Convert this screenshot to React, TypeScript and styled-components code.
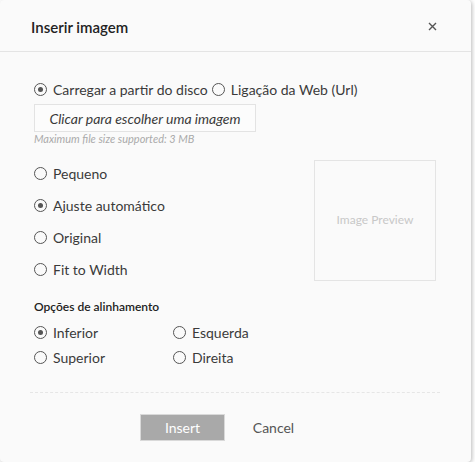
import React, { useState } from 'react'
import styled, { createGlobalStyle } from 'styled-components'

const GlobalStyle = createGlobalStyle`
  body {
    margin: 0;
    background: #ffffff;
    font-family: Lato, "Open Sans", Arial, sans-serif;
    color: #333333;
  }
`

const sizes = ['Pequeno', 'Ajuste automático', 'Original', 'Fit to Width']
const aligns = ['Inferior', 'Esquerda', 'Superior', 'Direita']

const Radio = ({ label, checked, onClick }: { label: string; checked: boolean; onClick: () => void }) => (
    <RadioLabel onClick={onClick}>
        <Circle checked={checked} />
        {label}
    </RadioLabel>
)

const App = () => {
    const [source, setSource] = useState('disk')
    const [size, setSize] = useState('Ajuste automático')
    const [align, setAlign] = useState('Inferior')

    return (
        <>
            <GlobalStyle />
            <Dialog>
                <Header>
                    <Title>Inserir imagem</Title>
                    <Close>
                        <svg width="9" height="9" viewBox="0 0 9 9">
                            <path d="M1 1 L8 8 M8 1 L1 8" stroke="#555" strokeWidth="1.4" />
                        </svg>
                    </Close>
                </Header>

                <Body>
                    {/* source */}
                    <SourceRow>
                        <Radio label="Carregar a partir do disco" checked={source === 'disk'} onClick={() => setSource('disk')} />
                        <Radio label="Ligação da Web (Url)" checked={source === 'url'} onClick={() => setSource('url')} />
                    </SourceRow>
                    <FileButton>Clicar para escolher uma imagem</FileButton>
                    <Hint>Maximum file size supported: 3 MB</Hint>

                    {/* size + preview */}
                    <SizeSection>
                        <SizeList>
                            {sizes.map((s) => (
                                <Radio key={s} label={s} checked={size === s} onClick={() => setSize(s)} />
                            ))}
                        </SizeList>
                        <Preview>Image Preview</Preview>
                    </SizeSection>

                    {/* alignment */}
                    <SubTitle>Opções de alinhamento</SubTitle>
                    <AlignGrid>
                        {aligns.map((a) => (
                            <Radio key={a} label={a} checked={align === a} onClick={() => setAlign(a)} />
                        ))}
                    </AlignGrid>
                </Body>

                <Divider />

                <Footer>
                    <InsertButton>Insert</InsertButton>
                    <CancelButton>Cancel</CancelButton>
                </Footer>
            </Dialog>
        </>
    )
}

export default App

const Dialog = styled.div`
    width: 471px;
    height: 462px;
    background: #fafafa;
    border-radius: 4px;
    box-shadow: 1px 1px 4px rgba(0, 0, 0, 0.28);
    box-sizing: border-box;
    overflow: hidden;
`

const Header = styled.div`
    height: 52px;
    display: flex;
    align-items: center;
    justify-content: space-between;
    padding: 0 34px 0 31px;
    border-bottom: 1px solid #e4e4e4;
    box-sizing: border-box;
`

const Title = styled.div`
    font-size: 15px;
    font-weight: 600;
    color: #222;
    margin-top: 2px;
`

const Close = styled.div`
    display: flex;
    cursor: pointer;
    margin-top: 1px;
`

const Body = styled.div`
    padding: 28px 34px 0 34px;
`

const SourceRow = styled.div`
    display: flex;
    gap: 4px;
`

const RadioLabel = styled.label`
    display: flex;
    align-items: center;
    height: 18px;
    font-size: 14px;
    color: #3a3a3a;
    cursor: pointer;
    white-space: nowrap;
`

const Circle = styled.span<{ checked: boolean }>`
    width: 13px;
    height: 13px;
    border: 1.3px solid #555;
    border-radius: 50%;
    box-sizing: border-box;
    margin-right: 6px;
    display: flex;
    align-items: center;
    justify-content: center;
    &::after {
        content: '';
        width: 5px;
        height: 5px;
        border-radius: 50%;
        background: ${(p) => (p.checked ? '#555' : 'transparent')};
    }
`

const FileButton = styled.div`
    margin-top: 6px;
    width: 222px;
    height: 28px;
    box-sizing: border-box;
    border: 1px solid #e3e3e3;
    background: #fcfcfc;
    display: flex;
    align-items: center;
    justify-content: center;
    font-size: 14px;
    font-style: italic;
    color: #3a3a3a;
`

const Hint = styled.div`
    font-size: 11px;
    font-style: italic;
    color: #aaa;
    line-height: 14px;
`

const SizeSection = styled.div`
    display: flex;
    justify-content: space-between;
    margin-top: 14px;
    padding-right: 1px;
`

const SizeList = styled.div`
    display: flex;
    flex-direction: column;
    gap: 14px;
    padding-top: 4px;
`

const Preview = styled.div`
    width: 122px;
    height: 121px;
    box-sizing: border-box;
    border: 1px solid #e4e4e4;
    display: flex;
    align-items: center;
    justify-content: center;
    padding-bottom: 3px;
    font-size: 12px;
    color: #c8c8c8;
`

const SubTitle = styled.div`
    margin-top: 18px;
    font-size: 12px;
    font-weight: 600;
    line-height: 16px;
    color: #222;
`

const AlignGrid = styled.div`
    display: grid;
    grid-template-columns: 139px auto;
    row-gap: 7px;
    margin-top: 8px;
`

const Divider = styled.div`
    margin: 26px 31px 0 30px;
    border-top: 1px dashed #e6e6e6;
`

const Footer = styled.div`
    display: flex;
    align-items: center;
    padding-left: 140px;
    margin-top: 21px;
    gap: 6px;
`

const InsertButton = styled.button`
    width: 85px;
    height: 27px;
    background: #a9a9a9;
    border: 1px solid #d9d9d9;
    color: #fff;
    font-family: inherit;
    font-size: 14px;
    padding: 0;
`

const CancelButton = styled.button`
    width: 85px;
    height: 27px;
    background: transparent;
    border: none;
    color: #555;
    font-family: inherit;
    font-size: 14px;
    padding: 0;
`
